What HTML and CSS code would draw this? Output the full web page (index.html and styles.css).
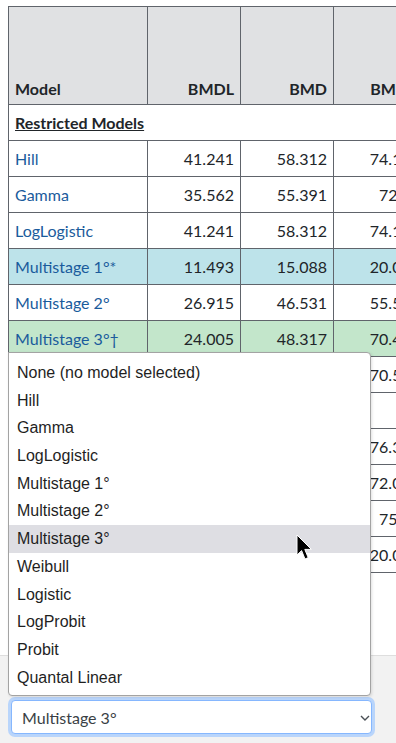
FILE: index.html
```html
<!DOCTYPE html>
<html lang="en">
<head>
    <meta charset="UTF-8">
    <meta name="viewport" content="width=device-width, initial-scale=1.0">
    <title>Model Summary</title>
    <link rel="stylesheet" href="styles.css">
</head>
<body>
<div class="page">
    <div class="table-wrap">
        <table class="summary">
            <colgroup>
                <col class="c-model">
                <col class="c-num">
                <col class="c-num">
                <col class="c-num">
                <col class="c-num">
                <col class="c-num">
            </colgroup>
            <thead>
                <tr>
                    <th class="name">Model</th>
                    <th>BMDL</th>
                    <th>BMD</th>
                    <th>BMDU</th>
                    <th>P Value</th>
                    <th>AIC</th>
                </tr>
            </thead>
            <tbody>
                <tr class="section"><td colspan="6"><u>Restricted Models</u></td></tr>
                <tr><td class="name"><a href="#">Hill</a></td><td>41.241</td><td>58.312</td><td>74.154</td><td>0.617</td><td>70.213</td></tr>
                <tr><td class="name"><a href="#">Gamma</a></td><td>35.562</td><td>55.391</td><td>72.58</td><td>0.702</td><td>69.875</td></tr>
                <tr><td class="name"><a href="#">LogLogistic</a></td><td>41.241</td><td>58.312</td><td>74.154</td><td>0.617</td><td>70.213</td></tr>
                <tr class="row-info"><td class="name"><a href="#">Multistage 1°*</a></td><td>11.493</td><td>15.088</td><td>20.072</td><td>0.188</td><td>72.644</td></tr>
                <tr><td class="name"><a href="#">Multistage 2°</a></td><td>26.915</td><td>46.531</td><td>55.586</td><td>0.761</td><td>68.931</td></tr>
                <tr class="row-pick"><td class="name"><a href="#">Multistage 3°†</a></td><td>24.005</td><td>48.317</td><td>70.412</td><td>0.827</td><td>68.402</td></tr>
                <tr><td class="name"><a href="#">Weibull</a></td><td>33.874</td><td>55.218</td><td>70.536</td><td>0.694</td><td>69.910</td></tr>
                <tr class="section"><td colspan="6"><u>Unrestricted Models</u></td></tr>
                <tr><td class="name"><a href="#">Logistic</a></td><td>48.227</td><td>61.906</td><td>76.318</td><td>0.512</td><td>70.880</td></tr>
                <tr><td class="name"><a href="#">LogProbit</a></td><td>40.012</td><td>56.742</td><td>72.051</td><td>0.655</td><td>70.101</td></tr>
                <tr><td class="name"><a href="#">Probit</a></td><td>46.390</td><td>60.114</td><td>75.24</td><td>0.540</td><td>70.662</td></tr>
                <tr><td class="name"><a href="#">Quantal Linear</a></td><td>11.493</td><td>15.088</td><td>20.072</td><td>0.188</td><td>72.644</td></tr>
            </tbody>
        </table>
    </div>

    <div class="picker">
        <select class="model-select">
            <option>None (no model selected)</option>
            <option>Hill</option>
            <option>Gamma</option>
            <option>LogLogistic</option>
            <option>Multistage 1°</option>
            <option>Multistage 2°</option>
            <option selected>Multistage 3°</option>
            <option>Weibull</option>
            <option>Logistic</option>
            <option>LogProbit</option>
            <option>Probit</option>
            <option>Quantal Linear</option>
        </select>
        <span class="chevron">
            <svg width="10" height="6" viewBox="0 0 10 6"><path d="M1 1l4 4 4-4" fill="none" stroke="#4a4f55" stroke-width="1.4"/></svg>
        </span>
    </div>

    <!-- open list of the select, drawn over the table -->
    <ul class="popup">
        <li>None (no model selected)</li>
        <li>Hill</li>
        <li>Gamma</li>
        <li>LogLogistic</li>
        <li>Multistage 1°</li>
        <li>Multistage 2°</li>
        <li class="hover">Multistage 3°</li>
        <li>Weibull</li>
        <li>Logistic</li>
        <li>LogProbit</li>
        <li>Probit</li>
        <li>Quantal Linear</li>
    </ul>

    <svg class="cursor" width="18" height="27" viewBox="0 0 18 27">
        <path d="M1 1 L1 21 L5.6 16.6 L9 25 L12.2 23.6 L8.8 15.4 L15.4 15.4 Z" fill="#000" stroke="#fff" stroke-width="1"/>
    </svg>
</div>
</body>
</html>
```

FILE: styles.css
```css
html, body {
    margin: 0;
    height: 100%;
    overflow: hidden;
}
body {
    font-family: Lato, "Noto Sans", sans-serif;
    font-size: 16px;
    color: #212529;
    background: #fff;
}
.page {
    position: relative;
    display: flex;
    flex-direction: column;
    height: 100vh;
}
.table-wrap {
    flex: 1;
    overflow: hidden;
    padding: 6px 0 0 8px;
}
.summary {
    border-collapse: collapse;
    table-layout: fixed;
    width: 605px;
}
.c-model {
    width: 139px;
}
.c-num {
    width: 93px;
}
.summary th,
.summary td {
    border: 1px solid #60646b;
    padding: 0 6px;
    text-align: right;
    white-space: nowrap;
}
.summary th {
    background: #e0e1e3;
    font-weight: bold;
    height: 92px;
    vertical-align: bottom;
    padding-bottom: 5px;
    line-height: 20px;
}
.summary td {
    height: 35px;
    line-height: 20px;
}
.summary .name {
    text-align: left;
}
.summary a {
    color: #1a5b9c;
    text-decoration: none;
}
.summary .section td {
    text-align: left;
    font-weight: bold;
}
.row-info td {
    background: #bde3ea;
}
.row-pick td {
    background: #c3e6cb;
}

.picker {
    position: relative;
    height: 88px;
    box-sizing: border-box;
    background: #f2f2f2;
    border-top: 1px solid #dedede;
    padding: 44px 0 0 11px;
}
.model-select {
    display: block;
    width: 361px;
    height: 34px;
    box-sizing: border-box;
    padding: 0 30px 0 10px;
    font-family: Lato, "Noto Sans", sans-serif;
    font-size: 16px;
    color: #3a3f45;
    background: #fff;
    border: 1px solid #86b7fe;
    border-radius: 4px;
    box-shadow: 0 0 0 3px #b9d5fb;
    appearance: none;
    -webkit-appearance: none;
    outline: none;
}
.chevron {
    position: absolute;
    left: 360px;
    top: 59px;
    line-height: 0;
}

.popup {
    position: absolute;
    left: 8px;
    top: 352px;
    width: 363px;
    height: 344px;
    box-sizing: border-box;
    margin: 0;
    padding: 6px 0 0;
    list-style: none;
    background: #fff;
    border: 1px solid #a3a3a3;
    border-radius: 0 4px 4px 4px;
    box-shadow: 1px 1px 3px rgba(0, 0, 0, 0.12);
    font-family: "Liberation Sans", Arial, sans-serif;
    font-size: 16px;
    color: #1f1f1f;
}
.popup li {
    height: 27.7px;
    line-height: 27.7px;
    padding-left: 8px;
}
.popup li.hover {
    background: #dedee3;
}
.cursor {
    position: absolute;
    left: 296px;
    top: 534px;
}
```
